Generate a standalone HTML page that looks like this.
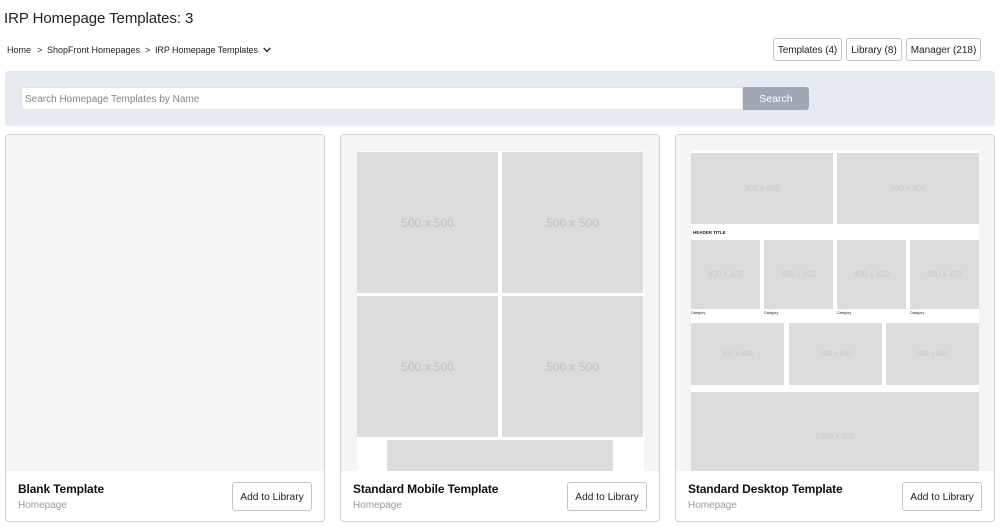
<!DOCTYPE html>
<html lang="en"><head><meta charset="utf-8"><title>IRP Homepage Templates</title>
<style>
html,body{margin:0;padding:0;background:#fff;width:1000px;height:527px;overflow:hidden}
body{position:relative;font-family:"Liberation Sans",sans-serif;color:#1c1c1c}
#w{left:0;top:0;width:1000px;height:527px;filter:blur(.35px)}
div,span{position:absolute;box-sizing:border-box;white-space:nowrap}
.t{background:#dbdbdb;color:#c0c0c0;display:flex;align-items:center;justify-content:center}
.d{color:#c8c8c8}
.card{top:134px;width:320px;height:388px;border:1px solid #cfcfcf;border-radius:4px;background:#fff;overflow:hidden}
.prev{left:0;top:0;width:318px;height:336px;background:#f5f5f5}
.name{top:346px;font-size:12px;letter-spacing:-.13px;font-weight:bold;line-height:16px;color:#111}
.sub{top:364px;font-size:10px;line-height:14px;color:#9a9a9a;left:12px}
.btn{border:1px solid #c4c4c4;border-radius:3px;background:#fff;display:flex;align-items:center;justify-content:center;font-size:10px;color:#222;padding-top:1px}
.add{left:226px;top:347px;width:80px;height:29px;font-size:10.2px}
.bc{top:44px;font-size:9px;line-height:12px;color:#222}
.cap{top:176px;font-size:3.5px;line-height:4px;color:#222}
</style></head><body><div id="w">
<div style="left:4px;top:10px;font-size:15px;letter-spacing:-.08px;line-height:18px;color:#222">IRP Homepage Templates: 3</div>
<div class="bc" style="left:7px">Home</div>
<div class="bc" style="left:37px">&gt;</div>
<div class="bc" style="left:47px">ShopFront Homepages</div>
<div class="bc" style="left:145px">&gt;</div>
<div class="bc" style="left:155px;letter-spacing:-.08px">IRP Homepage Templates</div>
<svg style="position:absolute;left:263px;top:47px" width="8" height="6" viewBox="0 0 8 6"><path d="M.7 1 4 4.5 7.3 1" fill="none" stroke="#222" stroke-width="1.3"/></svg>
<div class="btn" style="left:773px;top:38px;width:69px;height:23px;letter-spacing:-.1px">Templates (4)</div>
<div class="btn" style="left:846px;top:38px;width:56px;height:23px">Library (8)</div>
<div class="btn" style="left:906px;top:38px;width:75px;height:23px">Manager (218)</div>
<div style="left:5px;top:71px;width:990px;height:55px;background:#e6eaf2;border-radius:3px"></div>
<div style="left:21px;top:87px;width:722px;height:23px;background:#fff;border:1px solid #e2e2e2;border-radius:3px 0 0 3px;font-size:10px;line-height:23px;color:#858585;padding-left:3px">Search Homepage Templates by Name</div>
<div style="left:743px;top:87px;width:66px;height:23px;background:#a0a7b5;border-radius:0 3px 3px 0;color:#fff;font-size:10.5px;display:flex;align-items:center;justify-content:center">Search</div>

<div class="card" style="left:5px"><div class="prev"></div>
<div class="name" style="left:12px">Blank Template</div><div class="sub">Homepage</div><div class="btn add">Add to Library</div></div>

<div class="card" style="left:340px"><div class="prev"></div>
<div style="left:16px;top:16px;width:287px;height:320px;background:#fff"></div>
<div class="t" style="left:16px;top:17px;width:141px;height:141px;font-size:12px">500 x 500</div>
<div class="t" style="left:161px;top:17px;width:141px;height:141px;font-size:12px">500 x 500</div>
<div class="t" style="left:16px;top:161px;width:141px;height:141px;font-size:12px">500 x 500</div>
<div class="t" style="left:161px;top:161px;width:141px;height:141px;font-size:12px">500 x 500</div>
<div class="t" style="left:46px;top:305px;width:226px;height:31px"></div>
<div class="name" style="left:12px">Standard Mobile Template</div><div class="sub">Homepage</div><div class="btn add">Add to Library</div></div>

<div class="card" style="left:675px"><div class="prev"></div>
<div style="left:15px;top:15px;width:288px;height:321px;background:#fff"></div>
<div class="t d" style="left:15px;top:18px;width:142px;height:71px;font-size:8px">800 x 400</div>
<div class="t d" style="left:161px;top:18px;width:142px;height:71px;font-size:8px">800 x 400</div>
<div style="left:17px;top:95px;font-size:4.5px;line-height:5px;font-weight:bold;color:#222">HEADER TITLE</div>
<div class="t d" style="left:15px;top:105px;width:69px;height:69px;font-size:8px">400 x 400</div>
<div class="t d" style="left:88px;top:105px;width:69px;height:69px;font-size:8px">400 x 400</div>
<div class="t d" style="left:161px;top:105px;width:69px;height:69px;font-size:8px">400 x 400</div>
<div class="t d" style="left:234px;top:105px;width:69px;height:69px;font-size:8px">400 x 400</div>
<div class="cap" style="left:15px">Category</div>
<div class="cap" style="left:88px">Category</div>
<div class="cap" style="left:161px">Category</div>
<div class="cap" style="left:234px">Category</div>
<div class="t d" style="left:15px;top:188px;width:93px;height:62px;font-size:7px">600 x 400</div>
<div class="t d" style="left:113px;top:188px;width:93px;height:62px;font-size:7px">600 x 400</div>
<div class="t d" style="left:210px;top:188px;width:93px;height:62px;font-size:7px">600 x 400</div>
<div class="t d" style="left:15px;top:257px;width:288px;height:79px;font-size:8px;padding-top:9px">1600 x 500</div>
<div class="name" style="left:12px">Standard Desktop Template</div><div class="sub">Homepage</div><div class="btn add">Add to Library</div></div>
</div></body></html>
